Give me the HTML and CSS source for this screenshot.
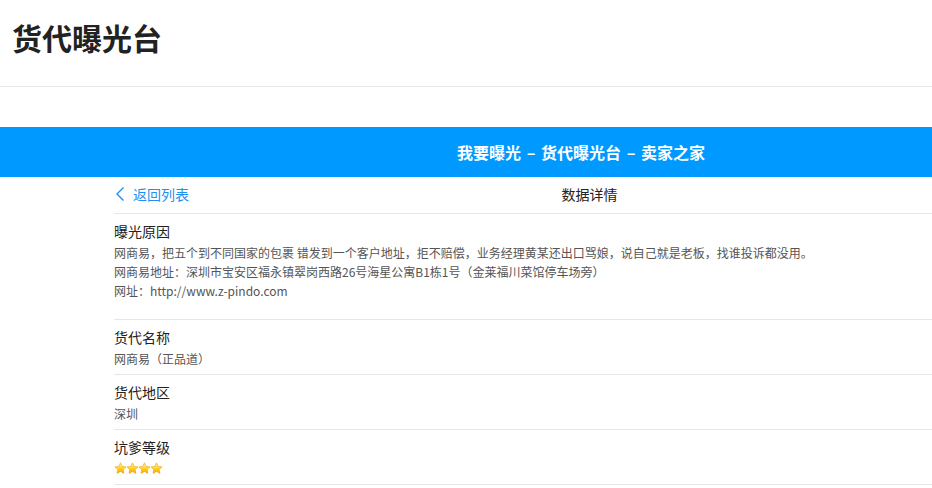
FILE: index.html
```html
<!DOCTYPE html>
<html lang="zh-CN">
<head>
<meta charset="utf-8">
<title>货代曝光台</title>
<link rel="stylesheet" href="styles.css">
</head>
<body>
<header class="page-header">
  <h1 class="page-title">货代曝光台</h1>
</header>
<div class="banner">
  <div class="wrap banner-inner">我要曝光 – 货代曝光台 – 卖家之家</div>
</div>
<main class="wrap">
  <nav class="nav-row">
    <a class="back" href="#">
      <svg class="chev" width="10" height="16" viewBox="0 0 10 16"><polyline points="8.5,1.5 2,8 8.5,14.5" fill="none" stroke="#1f8ff0" stroke-width="1.4"/></svg>
      <span>返回列表</span>
    </a>
    <span class="nav-title">数据详情</span>
  </nav>
  <section class="item item-first">
    <div class="item-label">曝光原因</div>
    <div class="item-value">网商易，把五个到不同国家的包裹 错发到一个客户地址，拒不赔偿，业务经理黄某还出口骂娘，说自己就是老板，找谁投诉都没用。</div>
    <div class="item-value">网商易地址：深圳市宝安区福永镇翠岗西路26号海星公寓B1栋1号（金莱福川菜馆停车场旁）</div>
    <div class="item-value">网址：http://www.z-pindo.com</div>
  </section>
  <section class="item">
    <div class="item-label">货代名称</div>
    <div class="item-value">网商易（正品道）</div>
  </section>
  <section class="item">
    <div class="item-label">货代地区</div>
    <div class="item-value">深圳</div>
  </section>
  <section class="item">
    <div class="item-label">坑爹等级</div>
    <div class="item-value stars">
      <svg class="star" viewBox="0 0 24 24"><defs><linearGradient id="sg" x1="0" y1="0" x2="0" y2="1"><stop offset="0" stop-color="#fff7b0"/><stop offset="0.55" stop-color="#ffd21f"/><stop offset="1" stop-color="#f39a00"/></linearGradient></defs><path d="M12 1.5l3.1 6.6 7.2.9-5.3 5 1.4 7.1L12 17.6l-6.4 3.5L7 14l-5.3-5 7.2-.9z" fill="url(#sg)" stroke="#f0a81c" stroke-width="1.2" stroke-linejoin="round"/></svg>
      <svg class="star" viewBox="0 0 24 24"><path d="M12 1.5l3.1 6.6 7.2.9-5.3 5 1.4 7.1L12 17.6l-6.4 3.5L7 14l-5.3-5 7.2-.9z" fill="url(#sg)" stroke="#f0a81c" stroke-width="1.2" stroke-linejoin="round"/></svg>
      <svg class="star" viewBox="0 0 24 24"><path d="M12 1.5l3.1 6.6 7.2.9-5.3 5 1.4 7.1L12 17.6l-6.4 3.5L7 14l-5.3-5 7.2-.9z" fill="url(#sg)" stroke="#f0a81c" stroke-width="1.2" stroke-linejoin="round"/></svg>
      <svg class="star" viewBox="0 0 24 24"><path d="M12 1.5l3.1 6.6 7.2.9-5.3 5 1.4 7.1L12 17.6l-6.4 3.5L7 14l-5.3-5 7.2-.9z" fill="url(#sg)" stroke="#f0a81c" stroke-width="1.2" stroke-linejoin="round"/></svg>
    </div>
  </section>
</main>
</body>
</html>
```
FILE: styles.css
```css
html, body {
  margin: 0;
  padding: 0;
  overflow: hidden;
  background: #fff;
}
body {
  font-family: "Noto Sans CJK SC", "Liberation Sans", sans-serif;
  color: #222;
  width: 932px;
}
.page-header {
  height: 87px;
  border-bottom: 1px solid #e8e8e8;
  padding-left: 12px;
  display: flex;
  align-items: center;
  box-sizing: border-box;
}
.page-title {
  margin: 0;
  font-size: 30px;
  font-weight: 700;
  color: #222;
  line-height: 1;
  position: relative;
  top: -6px;
}
.banner {
  margin-top: 40px;
  background: #0099ff;
  height: 50px;
  display: flex;
}
.wrap {
  margin-left: 114px;
  width: 818px;
}
.banner-inner {
  display: flex;
  align-items: center;
  justify-content: center;
  padding-left: 116px;
  box-sizing: border-box;
  color: #fff;
  font-size: 16px;
  font-weight: 700;
  word-spacing: 2px;
}
.nav-row {
  display: grid;
  height: 37px;
  border-bottom: 1px solid #e6e6e6;
  box-sizing: border-box;
  align-items: center;
  font-size: 14px;
}
.back, .nav-title {
  grid-area: 1 / 1;
}
.back {
  justify-self: start;
  display: flex;
  align-items: center;
  gap: 8px;
  color: #1f8ff0;
  text-decoration: none;
  margin-left: 1px;
  position: relative;
  top: -1px;
}
.chev {
  display: block;
}
.nav-title {
  justify-self: center;
  margin-left: 133px;
  color: #222;
  position: relative;
  top: -1px;
}
.item {
  border-bottom: 1px solid #e6e6e6;
  padding: 7px 0 6px;
}
.item-first {
  padding-bottom: 19px;
}
.item-label {
  font-size: 14px;
  line-height: 20px;
  height: 20px;
  margin-bottom: 2px;
  color: #222;
}
.item-value {
  font-size: 12px;
  line-height: 19px;
  color: #555;
}
.stars {
  display: flex;
  align-items: center;
  height: 19px;
}
.star {
  width: 13px;
  height: 13px;
  margin-right: -1px;
  display: block;
}
```
